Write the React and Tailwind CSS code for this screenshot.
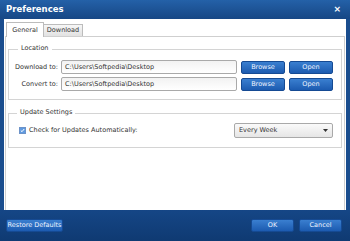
import React from "react";

const font = { fontFamily: "'DejaVu Sans', 'Liberation Sans', sans-serif" };

function Btn({ children, w = "w-[44px]" }) {
  return (
    <div className={`${w} h-[13px] rounded-[2px] border border-[#154a93] bg-gradient-to-b from-[#3a7fd0] to-[#1c5bb0] text-[#eef4ff] text-[6.5px] flex items-center justify-center leading-none`}>
      {children}
    </div>
  );
}

function Input({ value }) {
  return (
    <div className="w-[176px] h-[14px] rounded-[2px] border border-[#a9a9a9] bg-gradient-to-b from-[#f2f2f2] to-white text-[6.5px] text-[#333] flex items-center pl-[3px] leading-none">
      {value}
    </div>
  );
}

export default function App() {
  return (
    <div className="w-[350px] h-[241px] bg-[#1a4d8e] flex flex-col overflow-hidden" style={font}>
      <div className="h-[19px] flex items-center justify-between pl-[6px] pr-[9px] bg-gradient-to-b from-[#2461a8] to-[#174785]">
        <span className="text-white font-bold text-[8.5px] leading-none">Preferences</span>
        <span className="text-white font-bold text-[9px] leading-none">×</span>
      </div>
      <div className="flex-1 mx-[4px] bg-white flex flex-col pt-[3px] px-[1px]">
        <div className="flex items-end h-[14px] pl-[1px]">
          <div className="w-[38px] h-[15px] border border-b-0 border-[#bcbcbc] bg-white text-[6.5px] text-[#333] flex items-center justify-center leading-none relative top-[1px]">General</div>
          <div className="w-[39px] h-[12px] border border-b-0 border-l-0 border-[#bcbcbc] bg-gradient-to-b from-[#f6f6f6] to-[#e2e2e2] text-[6.5px] text-[#333] flex items-center justify-center leading-none">Download</div>
        </div>
        <div className="flex-1 border border-[#cfcfcf] border-b-0 pt-[12px] px-[2px] flex flex-col">
          <div className="relative border border-[#d4d4d4] h-[51px] flex flex-col pt-[10px] gap-[3px]">
            <span className="absolute -top-[5px] left-[9px] bg-white px-[3px] text-[6.5px] text-[#333] leading-none">Location</span>
            <div className="flex items-center">
              <span className="w-[52px] text-right pr-[3px] text-[6.5px] text-[#333] leading-none">Download to:</span>
              <Input value="C:\Users\Softpedia\Desktop" />
              <div className="ml-[4px]"><Btn>Browse</Btn></div>
              <div className="ml-[4px]"><Btn>Open</Btn></div>
            </div>
            <div className="flex items-center">
              <span className="w-[52px] text-right pr-[3px] text-[6.5px] text-[#333] leading-none">Convert to:</span>
              <Input value="C:\Users\Softpedia\Desktop" />
              <div className="ml-[4px]"><Btn>Browse</Btn></div>
              <div className="ml-[4px]"><Btn>Open</Btn></div>
            </div>
          </div>
          <div className="relative mt-[13px] border border-[#d4d4d4] h-[35px] flex items-center pl-[10px] pr-[8px]">
            <span className="absolute -top-[5px] left-[8px] bg-white px-[3px] text-[6.5px] text-[#333] leading-none">Update Settings</span>
            <div className="w-[7px] h-[7px] border border-[#6d93c8] bg-[#5f9ae0] flex items-center justify-center">
              <svg width="5" height="5" viewBox="0 0 5 5"><path d="M0.8 2.5 L2 3.7 L4.2 1" stroke="white" strokeWidth="1" fill="none" /></svg>
            </div>
            <span className="ml-[3px] text-[6.5px] text-[#333] leading-none">Check for Updates Automatically:</span>
            <div className="ml-auto w-[99px] h-[15px] border border-[#a9a9a9] rounded-[2px] bg-gradient-to-b from-[#fafafa] to-[#e6e6e6] flex items-center justify-between px-[4px]">
              <span className="text-[6.5px] text-[#333] leading-none">Every Week</span>
              <svg width="5" height="3" viewBox="0 0 5 3"><path d="M0 0 L5 0 L2.5 3 Z" fill="#333" /></svg>
            </div>
          </div>
        </div>
      </div>
      <div className="h-[31px] bg-gradient-to-b from-[#154686] to-[#0f3a72] flex items-center px-[6px]">
        <Btn w="w-[57px]">Restore Defaults</Btn>
        <div className="ml-auto"><Btn w="w-[43px]">OK</Btn></div>
        <div className="ml-[5px] mr-[2px]"><Btn w="w-[43px]">Cancel</Btn></div>
      </div>
    </div>
  );
}
